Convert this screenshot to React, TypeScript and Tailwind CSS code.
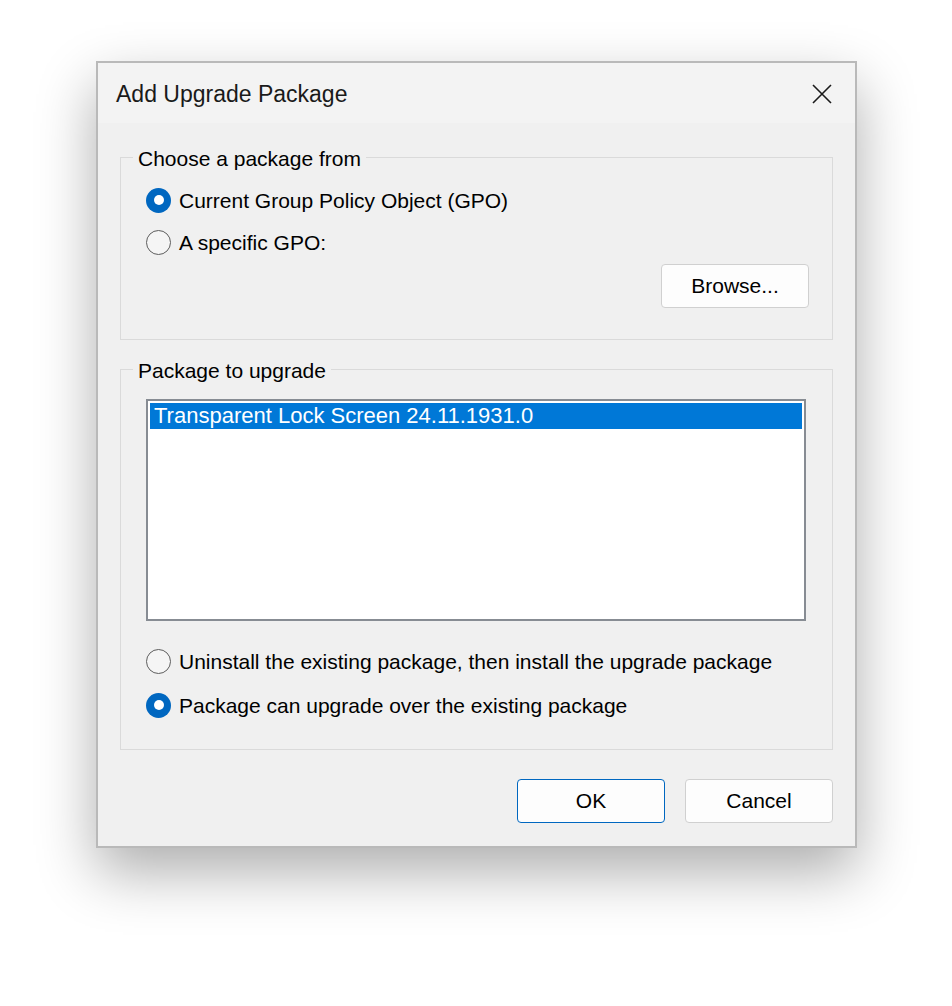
const font = { fontFamily: '"Liberation Sans", Arial, sans-serif' };

const Radio = ({ checked, label }: { checked?: boolean; label: string }) => (
  <div className="flex h-[30px] items-center gap-[8px]">
    {checked ? (
      <span className="flex h-[25px] w-[25px] shrink-0 items-center justify-center rounded-full bg-[#0067c0]">
        <span className="h-[10px] w-[10px] rounded-full bg-white" />
      </span>
    ) : (
      <span className="h-[25px] w-[25px] shrink-0 rounded-full border-[1.5px] border-[#5d5d5d] bg-[#f5f5f5]" />
    )}
    <span className="text-[21px] leading-none text-black">{label}</span>
  </div>
);

const Group = ({ title, className, children }: { title: string; className: string; children: React.ReactNode }) => (
  <div className={`relative border border-[#dadada] ${className}`}>
    <span className="absolute -top-[11px] left-[12px] bg-[#f0f0f0] px-[5px] text-[21px] leading-[24px] text-black">
      {title}
    </span>
    {children}
  </div>
);

const Button = ({ label, primary }: { label: string; primary?: boolean }) => (
  <button
    className={`h-[44px] w-[148px] rounded-[4px] border bg-[#fdfdfd] text-[21px] text-black ${
      primary ? 'border-[#0067c0]' : 'border-[#d0d0d0]'
    }`}
  >
    {label}
  </button>
);

export default function App() {
  return (
    <div className="min-h-screen bg-white pl-[96px] pt-[61px]" style={font}>
      <div className="flex h-[787px] w-[761px] flex-col border-2 border-[#b9b9b9] bg-[#f0f0f0] shadow-[0_24px_55px_rgba(0,0,0,0.32)]">
        <div className="flex h-[60px] items-center justify-between bg-[#f3f3f3] pl-[18px] pr-[23px] pt-[2px]">
          <span className="text-[23px] text-[#1a1a1a]">Add Upgrade Package</span>
          <svg width="20" height="20" viewBox="0 0 20 20">
            <path d="M1 1 L19 19 M19 1 L1 19" stroke="#1a1a1a" strokeWidth="1.6" />
          </svg>
        </div>

        <div className="flex flex-1 flex-col px-[22px] pt-[34px]">
          <Group title="Choose a package from" className="h-[183px] pl-[25px] pr-[23px] pt-[27px]">
            <div className="flex flex-col gap-[12px]">
              <Radio checked label="Current Group Policy Object (GPO)" />
              <Radio label="A specific GPO:" />
            </div>
            <div className="mt-[7px] flex justify-end">
              <Button label="Browse..." />
            </div>
          </Group>

          <Group title="Package to upgrade" className="mt-[29px] h-[381px] pl-[25px] pr-[26px] pt-[29px]">
            <div className="h-[222px] border-2 border-[#878c93] bg-white p-[2px]">
              <div className="flex h-[26px] items-center bg-[#0078d7] pl-[4px] text-[22px] leading-none text-white">
                Transparent Lock Screen 24.11.1931.0
              </div>
            </div>
            <div className="mt-[25px] flex flex-col gap-[14px]">
              <Radio label="Uninstall the existing package, then install the upgrade package" />
              <Radio checked label="Package can upgrade over the existing package" />
            </div>
          </Group>

          <div className="mt-[29px] flex justify-end gap-[20px]">
            <Button primary label="OK" />
            <Button label="Cancel" />
          </div>
        </div>
      </div>
    </div>
  );
}
